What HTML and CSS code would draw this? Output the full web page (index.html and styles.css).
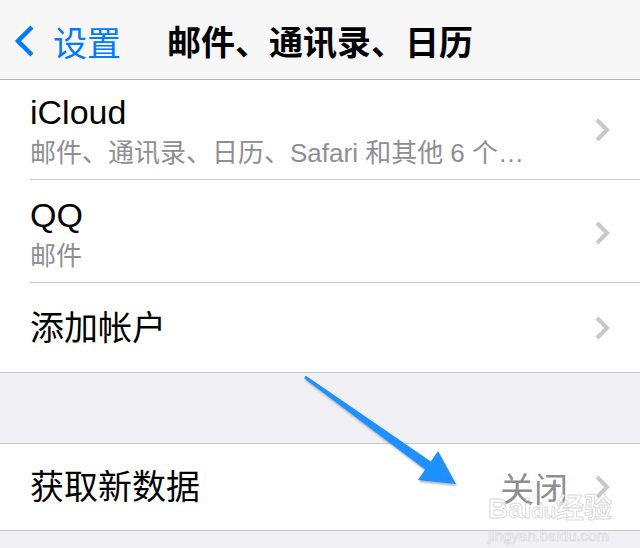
FILE: index.html
```html
<!DOCTYPE html>
<html lang="zh-CN">
<head>
    <meta charset="UTF-8">
    <title>邮件、通讯录、日历</title>
    <link rel="stylesheet" href="styles.css">
</head>
<body>

<div class="screen">
    <header class="nav-bar">
        <a class="nav-back" href="#">
            <svg class="back-chevron" width="22" height="34" viewBox="0 0 22 34">
                <polyline points="19,3 5,17 19,31" />
            </svg>
            <span>设置</span>
        </a>
        <h1 class="nav-title">邮件、通讯录、日历</h1>
        <span></span>
    </header>

    <ul class="group">
        <li class="cell cell-first">
            <div class="cell-inner">
                <div class="cell-text">
                    <div class="cell-title">iCloud</div>
                    <div class="cell-subtitle">邮件、通讯录、日历、Safari 和其他 6 个…</div>
                </div>
                <svg class="disclosure" width="16" height="26" viewBox="0 0 16 26">
                    <polyline points="3,3 13,13 3,23" />
                </svg>
            </div>
        </li>
        <li class="cell cell-sub">
            <div class="cell-inner">
                <div class="cell-text">
                    <div class="cell-title">QQ</div>
                    <div class="cell-subtitle">邮件</div>
                </div>
                <svg class="disclosure" width="16" height="26" viewBox="0 0 16 26">
                    <polyline points="3,3 13,13 3,23" />
                </svg>
            </div>
        </li>
        <li class="cell cell-single">
            <div class="cell-inner">
                <div class="cell-text">
                    <div class="cell-title">添加帐户</div>
                </div>
                <svg class="disclosure" width="16" height="26" viewBox="0 0 16 26">
                    <polyline points="3,3 13,13 3,23" />
                </svg>
            </div>
        </li>
    </ul>

    <ul class="group group-second">
        <li class="cell cell-fetch">
            <div class="cell-inner">
                <div class="cell-text">
                    <div class="cell-title">获取新数据</div>
                </div>
                <span class="cell-value">关闭</span>
                <svg class="disclosure" width="16" height="26" viewBox="0 0 16 26">
                    <polyline points="3,3 13,13 3,23" />
                </svg>
            </div>
        </li>
    </ul>

    <!-- annotation arrow drawn over the screenshot -->
    <svg class="arrow" width="640" height="548" viewBox="0 0 640 548">
        <polygon points="305.9,375.8 430.9,461.4 438,451 456,484 418,480 425.1,469.6 304.1,378.2" />
    </svg>

    <div class="watermark">
        <div class="wm-logo">Bai<span class="wm-du">du</span>经验</div>
        <div class="wm-url">jingyan.baidu.com</div>
    </div>
</div>

</body>
</html>
```

FILE: styles.css
```css
body {
    margin: 0;
    background-color: #efeff4;
    font-family: 'Liberation Sans', 'Noto Sans CJK SC', sans-serif;
}

.screen {
    position: relative;
    width: 640px;
    height: 548px;
    overflow: hidden;
    background-color: #efeff4;
}

.nav-bar {
    height: 79px;
    background-color: #f7f7f8;
    border-bottom: 1px solid #b2b2b2;
    display: grid;
    grid-template-columns: 1fr auto 1fr;
    align-items: center;
}

.nav-back {
    display: flex;
    align-items: center;
    gap: 18px;
    padding-left: 13px;
    padding-top: 3px;
    color: #007aff;
    text-decoration: none;
    font-size: 34px;
}

.back-chevron polyline {
    fill: none;
    stroke: #007aff;
    stroke-width: 4.5;
}

.nav-title {
    margin: 0;
    font-size: 34px;
    font-weight: 600;
    color: #000;
    padding-top: 1px;
}

.group {
    list-style: none;
    margin: 0;
    padding: 0;
    background-color: #fff;
    border-bottom: 1px solid #c8c7cc;
}

.group-second {
    margin-top: 70px;
    border-top: 1px solid #c8c7cc;
}

.cell {
    padding-left: 30px;
}

.cell-inner {
    display: flex;
    align-items: center;
    padding-right: 30px;
    border-bottom: 1px solid #c8c7cc;
}

.cell:last-child .cell-inner {
    border-bottom: none;
}

.cell-first .cell-inner {
    height: 99px;
}

.cell-sub .cell-inner {
    box-sizing: border-box;
    height: 103px;
    padding-top: 4px;
}

.cell-single .cell-inner {
    height: 89px;
}

.cell-fetch .cell-inner {
    height: 86px;
}

.cell-text {
    flex: 1;
}

.cell-title {
    font-size: 34px;
    line-height: 40px;
    color: #000;
}

.cell-subtitle {
    margin-top: 6px;
    font-size: 26px;
    line-height: 30px;
    color: #8e8e93;
    white-space: nowrap;
}

.cell-value {
    font-size: 34px;
    color: #8e8e93;
    margin-right: 26px;
}

.disclosure polyline {
    fill: none;
    stroke: #c7c7cc;
    stroke-width: 4;
}

.arrow {
    position: absolute;
    left: 0;
    top: 0;
    pointer-events: none;
    filter: drop-shadow(1px 2px 1px rgba(0, 0, 0, 0.3));
}

.arrow polygon {
    fill: #1e90ff;
}

.watermark {
    position: absolute;
    left: 488px;
    top: 494px;
    width: 120px;
    text-align: center;
    color: rgba(255, 255, 255, 0.75);
    -webkit-text-stroke: 1px rgba(170, 170, 170, 0.45);
    pointer-events: none;
}

.wm-logo {
    font-size: 28px;
    line-height: 30px;
    font-weight: 700;
    white-space: nowrap;
}

.wm-du {
    font-size: 20px;
}

.wm-url {
    font-size: 15px;
    line-height: 20px;
    -webkit-text-stroke: 0.6px rgba(170, 170, 170, 0.45);
}
```
